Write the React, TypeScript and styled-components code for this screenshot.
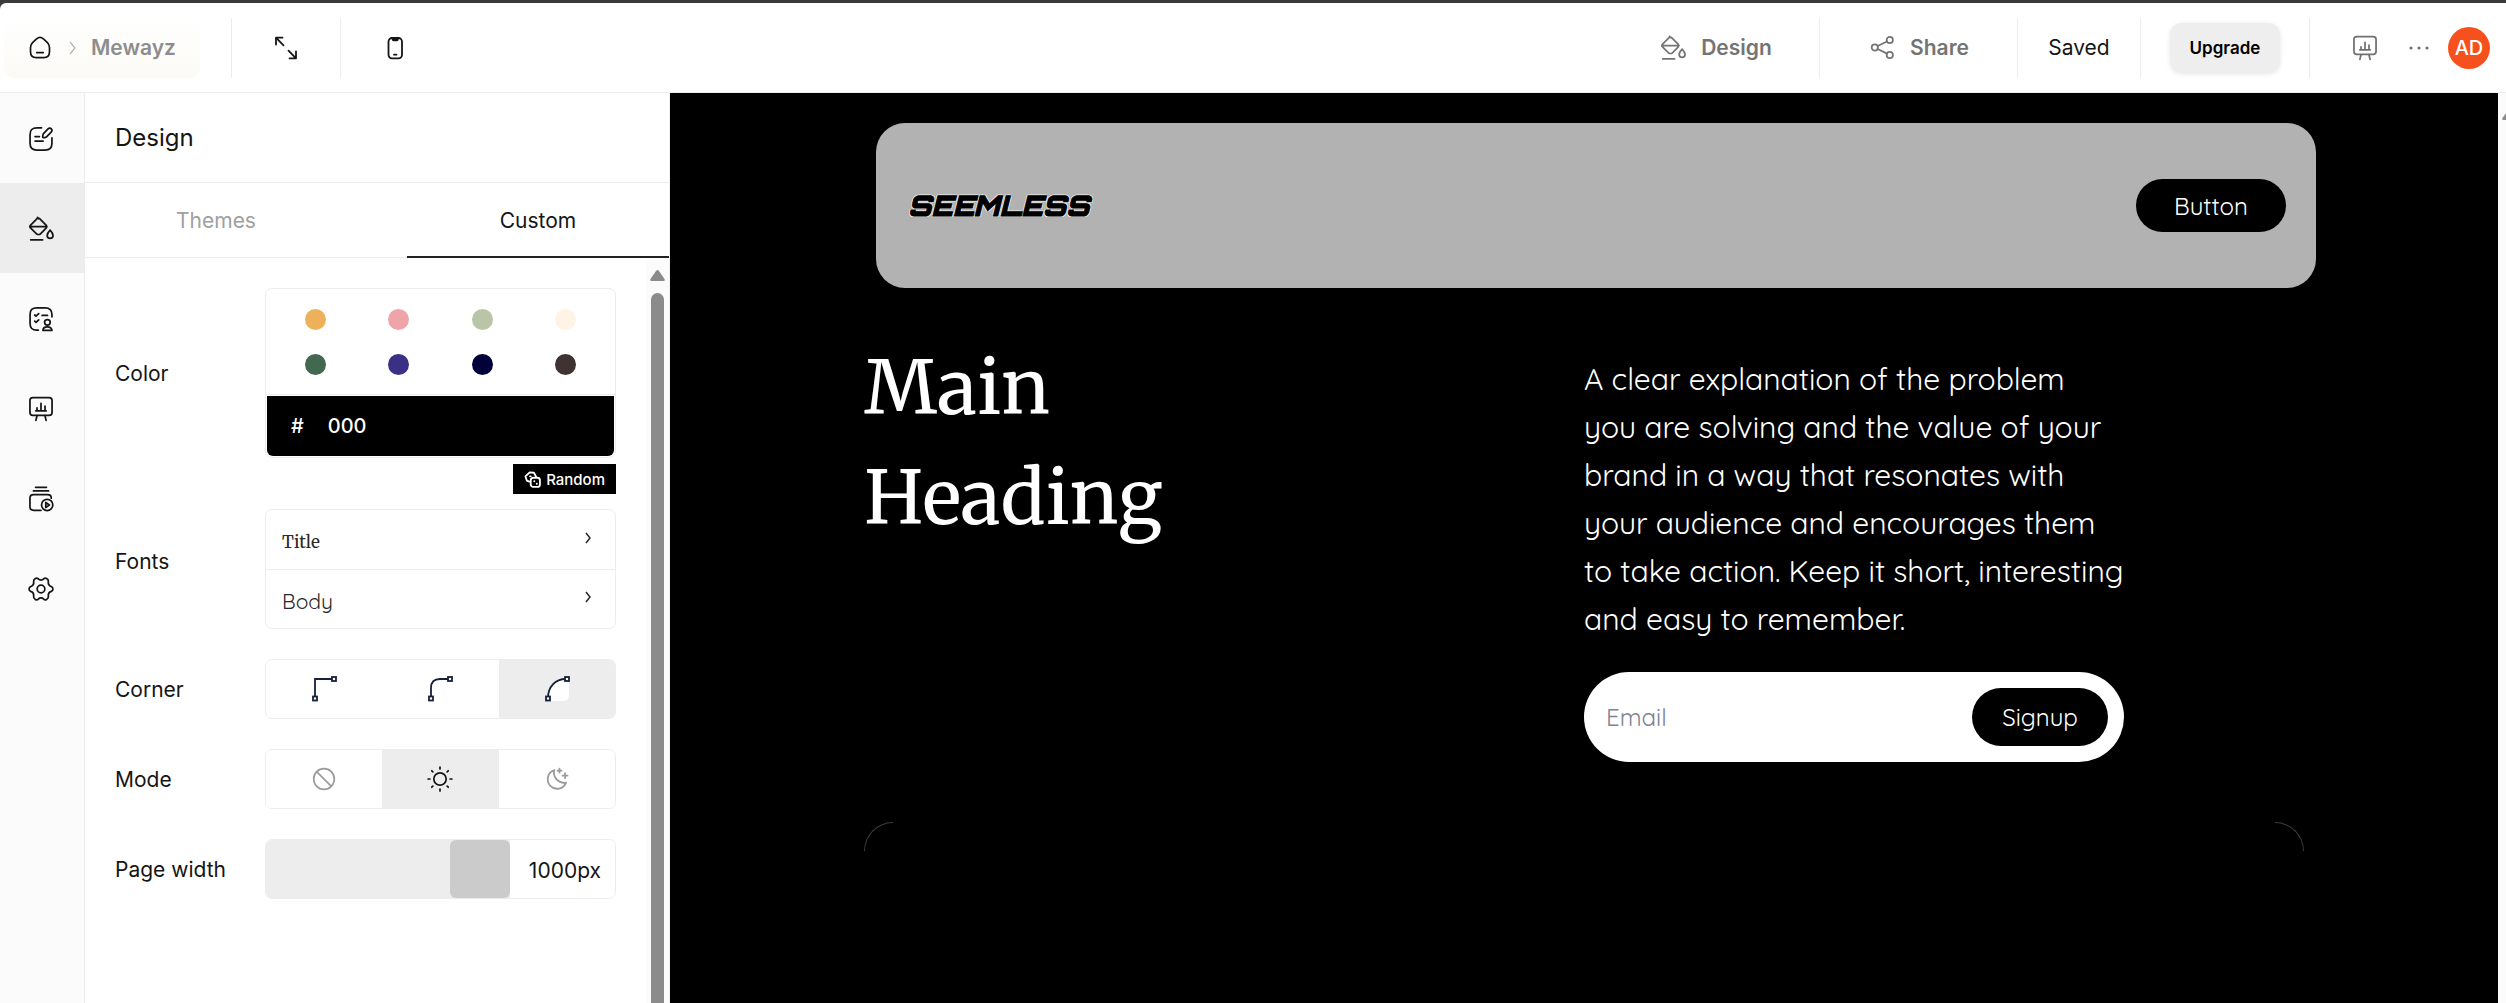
import React, { useState } from 'react';
import styled, { createGlobalStyle, css } from 'styled-components';

const Global = createGlobalStyle`
  *, *::before, *::after { box-sizing: border-box; }
  body { margin: 0; background: #3a3a3a; }
  body, button, input { font-family: Inter, "Liberation Sans", sans-serif; }
  button { border: 0; background: none; padding: 0; cursor: pointer; color: inherit; }
  a { color: inherit; text-decoration: none; }
  svg { display: block; flex: none; }
`;

const serif = 'Merriweather, "DejaVu Serif", "Liberation Serif", serif';
const rounded = 'Quicksand, Lato, "Open Sans", sans-serif';
const line = '#ededed';

/* ---------- shell ---------- */

const Page = styled.div`
  display: flex;
  flex-direction: column;
  min-height: 100vh;
  padding-top: 3px;
  color: #151515;
`;

const TopBar = styled.header`
  display: flex;
  justify-content: space-between;
  align-items: center;
  height: 90px;
  padding: 0 16px 0 4px;
  background: #fff;
  border-bottom: 1px solid ${line};
  border-top-left-radius: 6px;
`;

const BarGroup = styled.div`
  display: flex;
  align-items: center;
`;

const Breadcrumb = styled.nav`
  display: flex;
  align-items: center;
  width: 196px;
  height: 60px;
  margin-right: 31px;
  padding-left: 24px;
  border-radius: 10px;
  background: linear-gradient(#fff, #fbfaf5);
`;

const SiteName = styled.a`
  font-size: 21px;
  font-weight: 600;
  color: #8d8d8d;
`;

const Crumb = styled.span`
  display: flex;
  justify-content: center;
  width: 38px;
  margin-left: 1px;
  color: #aaa;
`;

const Cell = styled.div<{ $width: number; $rule?: boolean }>`
  display: flex;
  align-items: center;
  justify-content: center;
  width: ${(p) => p.$width}px;
  height: 60px;
  border-left: ${(p) => (p.$rule === false ? '0' : `1px solid ${line}`)};
`;

const IconButton = styled.button`
  display: grid;
  place-items: center;
  height: 44px;
`;

const BarButton = styled.button`
  display: flex;
  align-items: center;
  gap: 15px;
  padding-left: 2px;
  font-size: 21px;
  font-weight: 600;
  color: #747474;
`;

const Saved = styled.span`
  font-size: 21px;
`;

const Upgrade = styled.button`
  width: 110px;
  height: 50px;
  border-radius: 12px;
  background: #eee;
  box-shadow: 0 1px 5px rgba(0, 0, 0, 0.1);
  font-size: 17px;
  font-weight: 600;
  color: #000;
`;

const Account = styled.div`
  display: flex;
  align-items: center;
  height: 60px;
  padding-left: 42px;
  border-left: 1px solid ${line};
  color: #707070;
`;

const AccountTools = styled.div`
  display: flex;
  align-items: center;
  gap: 30px;
  margin-right: 18px;
`;

const Avatar = styled.button`
  width: 42px;
  height: 42px;
  border-radius: 50%;
  background: #f6511d;
  color: #fff;
  font-size: 20px;
  font-weight: 500;
`;

const Workspace = styled.div`
  display: flex;
  flex: 1;
`;

const Rail = styled.nav`
  flex: none;
  width: 85px;
  background: #fbfbfb;
  border-right: 1px solid ${line};
`;

const RailItem = styled.button<{ $active?: boolean }>`
  display: grid;
  place-items: center;
  width: 100%;
  height: 90px;
  padding: 2px 3px 0 0;
  background: ${(p) => (p.$active ? '#ededed' : 'transparent')};
`;

/* ---------- design panel ---------- */

const Panel = styled.aside`
  display: flex;
  flex-direction: column;
  flex: none;
  width: 585px;
  background: #fff;
  border-right: 1px solid #f0f0f0;
`;

const PanelTitle = styled.h1`
  margin: 0;
  padding: 0 30px;
  font-size: 24px;
  line-height: 89px;
  font-weight: 400;
  border-bottom: 1px solid ${line};
`;

const Tabs = styled.div`
  display: flex;
  justify-content: space-between;
  border-bottom: 1px solid ${line};
`;

const Tab = styled.button<{ $active?: boolean }>`
  width: 262px;
  height: 75px;
  margin-bottom: -1px;
  padding-top: 2px;
  border-bottom: 2px solid ${(p) => (p.$active ? '#222' : 'transparent')};
  font-size: 21px;
  color: ${(p) => (p.$active ? '#151515' : '#a0a0a0')};
`;

const PanelScroll = styled.div`
  display: flex;
  flex: 1;
`;

const Settings = styled.form`
  flex: 1;
  padding: 30px;
`;

const ScrollTrack = styled.div`
  display: flex;
  flex-direction: column;
  align-items: center;
  width: 23px;
  padding-top: 12px;
  gap: 12px;
  background: #fbfbfb;
`;

const ScrollThumb = styled.div`
  flex: 1;
  width: 13px;
  border-radius: 7px 7px 0 0;
  background: #8b8b8b;
`;

const Field = styled.div<{ $gap?: number }>`
  display: grid;
  grid-template-columns: 150px 1fr;
  align-items: center;
  margin-bottom: ${(p) => p.$gap ?? 30}px;
`;

const Label = styled.label`
  font-size: 21px;
`;

const FontsLabel = styled.span`
  padding-bottom: 15px;
  font-size: 21px;
`;

const box = css`
  border: 1px solid ${line};
  border-radius: 7px;
  overflow: hidden;
`;

const ColorBox = styled.div`
  ${box}
  padding-bottom: 1px;
`;

const Swatches = styled.div`
  display: grid;
  grid-template-columns: repeat(4, 1fr);
  justify-items: center;
  row-gap: 24px;
  padding: 20px 8px 19px;
  border-bottom: 1px solid ${line};
`;

const Swatch = styled.button<{ $color: string }>`
  width: 21px;
  height: 21px;
  border-radius: 50%;
  background: ${(p) => p.$color};
`;

const HexRow = styled.div`
  display: flex;
  align-items: center;
  gap: 24px;
  height: 60px;
  margin: 1px 1px 0;
  padding-left: 24px;
  border-radius: 0 0 6px 6px;
  background: #000;
  color: #fff;
  font-size: 20px;
  font-weight: 500;
`;

const HexInput = styled.input`
  width: 200px;
  border: 0;
  padding: 0;
  background: none;
  color: #fff;
  font-size: 20px;
  font-weight: 500;
  outline: none;
`;

const RandomRow = styled.div`
  display: flex;
  justify-content: flex-end;
  margin-bottom: 15px;
`;

const RandomButton = styled.button`
  display: flex;
  align-items: center;
  gap: 5px;
  height: 30px;
  padding: 0 11px;
  background: #000;
  color: #fff;
  font-size: 15px;
  font-weight: 500;
`;

const FontBox = styled.div`
  ${box}
`;

const FontButton = styled.button<{ $face: string; $size: number }>`
  display: flex;
  align-items: center;
  justify-content: space-between;
  width: 100%;
  height: 59px;
  padding: 4px 24px 0 16px;
  font-family: ${(p) => p.$face};
  font-size: ${(p) => p.$size}px;
  color: #2a2a2a;

  svg { margin-bottom: 8px; }

  & + & {
    border-top: 1px solid ${line};
  }
`;

const Choices = styled.div`
  ${box}
  display: grid;
  grid-template-columns: repeat(3, 1fr);
  height: 60px;
`;

const Choice = styled.label<{ $on: boolean; $dim?: boolean }>`
  display: grid;
  place-items: center;
  cursor: pointer;
  background: ${(p) => (p.$on ? '#ededed' : '#fff')};
  color: ${(p) => (p.$on || !p.$dim ? '#151515' : '#9b9b9b')};
`;

const HiddenRadio = styled.input`
  appearance: none;
  position: absolute;
  margin: 0;
  width: 1px;
  height: 1px;
  opacity: 0;
`;

const WidthBox = styled.div`
  ${box}
  display: flex;
  height: 60px;
`;

const WidthRange = styled.input`
  appearance: none;
  flex: 1;
  min-width: 0;
  height: 100%;
  margin: 0;
  background: #ededed;

  &::-webkit-slider-thumb {
    appearance: none;
    width: 60px;
    height: 58px;
    border-radius: 6px;
    background: #cbcbcb;
  }
`;

const WidthValue = styled.input`
  width: 105px;
  border: 0;
  padding: 2px 14px 0 0;
  text-align: right;
  font-size: 21px;
  color: #151515;
  outline: none;
`;

/* ---------- site preview ---------- */

const Preview = styled.main`
  flex: 1;
  min-width: 0;
  background: #000;
  color: #fff;
  font-family: ${rounded};
`;

const Canvas = styled.div`
  max-width: 1440px;
  margin: 0 auto;
  padding-top: 30px;
`;

const SiteHeader = styled.header`
  display: flex;
  align-items: center;
  justify-content: space-between;
  height: 165px;
  margin: 0 -12px 0 12px;
  padding: 0 30px;
  border-radius: 29px;
  background: #b2b2b2;
`;

const Logo = styled.a`
  padding-left: 2px;
  font-family: Orbitron, "DejaVu Sans", sans-serif;
  font-size: 28px;
  font-weight: 900;
  font-style: italic;
  color: #000;
  text-shadow: 1px 1px #f4f4f4, -1px -1px #f4f4f4, 1px -1px #f4f4f4, -1px 1px #f4f4f4;
  -webkit-text-stroke: 1px #000;
`;

const Pill = styled.button<{ $width: number; $height: number }>`
  width: ${(p) => p.$width}px;
  height: ${(p) => p.$height}px;
  border-radius: 29px;
  background: #000;
  color: #fff;
  font-family: ${rounded};
  font-size: 24px;
`;

const Hero = styled.section`
  display: grid;
  grid-template-columns: 1fr 1fr;
  padding: 45px 0 60px;
`;

const Heading = styled.h2`
  margin: 0;
  font-family: ${serif};
  font-size: 74px;
  line-height: 110px;
  font-weight: 400;
`;

const Pitch = styled.div`
  max-width: 540px;
  padding-top: 22px;
`;

const Copy = styled.p`
  margin: 0 0 29px;
  font-size: 30px;
  line-height: 48px;
`;

const Signup = styled.form`
  display: flex;
  align-items: center;
  height: 90px;
  padding: 0 16px 0 22px;
  border-radius: 45px;
  background: #fff;
`;

const Email = styled.input`
  flex: 1;
  min-width: 0;
  border: 0;
  padding: 0;
  outline: none;
  font-family: ${rounded};
  font-size: 24px;

  &::placeholder { color: #7d8491; }
`;

const NextBlock = styled.div`
  display: flex;
  justify-content: space-between;
`;

const Corner = styled.span<{ $side: 'left' | 'right' }>`
  width: 29px;
  height: 29px;
  border-top: 1px solid #3c3c3c;
  border-${(p) => p.$side}: 1px solid #3c3c3c;
  border-top-${(p) => p.$side}-radius: 29px;
`;

const PageScroll = styled.div`
  flex: none;
  width: 8px;
  padding: 16px 0 0 4px;
  overflow: hidden;
  background: #fbfbfb;
`;

/* ---------- icons ---------- */

const Svg = ({ size = 24, w = 1.5, children }: { size?: number; w?: number; children: React.ReactNode }) => (
  <svg width={size} height={size} viewBox="0 0 24 24" fill="none" stroke="currentColor" strokeWidth={w} strokeLinecap="round" strokeLinejoin="round" aria-hidden="true">
    {children}
  </svg>
);

const HomeIcon = () => (
  <Svg size={24} w={1.7}>
    <path d="M2.5 11.4c0-2.4.7-3.6 2.3-5.1l3.8-3.5c2-1.8 4.8-1.8 6.8 0l3.8 3.5c1.6 1.5 2.3 2.7 2.3 5.1v4.1c0 4.3-1.7 6.2-5.8 6.2H8.3c-4.1 0-5.8-1.9-5.8-6.2zM8.7 16.6h6.6" />
  </Svg>
);
const ExpandIcon = () => (
  <Svg size={24} w={1.8}>
    <path d="M8.5 1.7H2v6.8M2.2 1.9l7.3 7.4M14.5 14.7l7.3 7.4M15.5 22.3H22v-6.8" />
  </Svg>
);
const PhoneIcon = () => (
  <Svg size={24} w={1.8}>
    <rect x="5.500" y="2" width="13.500" height="20.300" rx="3.500" />
    <path d="M9.3 2.3c.2 1.400.8 2 1.800 2h2.300c1 0 1.600-.6 1.800-2z" fill="currentColor" />
    <path d="M11 18.700h2.500" />
  </Svg>
);
const BucketIcon = ({ size = 26 }: { size?: number }) => (
  <Svg size={size} w={1.6}>
    <path d="M8.700 1.200l1 1.200M2.200 8.700l6.200-6.200c.8-.8 1.500-.8 2.300 0L16.900 8.700c.8.8.8 1.500 0 2.300l-5.400 5.400c-.9.900-2.700.9-3.600 0L2.300 11c-.8-.8-.8-1.600-.1-2.300zM1.900 9.900h15.300M2.500 22h11" />
    <path d="M20.400 13s-2.700 2.900-2.700 4.900a2.700 2.700 0 0 0 5.400 0c0-2-2.700-4.900-2.700-4.900z" />
  </Svg>
);
const ShareIcon = () => (
  <Svg size={25} w={1.7}>
    <circle cx="4.600" cy="12" r="3" />
    <circle cx="19" cy="4.800" r="3" />
    <circle cx="19" cy="19.300" r="3" />
    <path d="M7.400 10.600l8.900-4.400M7.400 13.400l8.900 4.500" />
  </Svg>
);
const BoardIcon = ({ size = 26 }: { size?: number }) => (
  <Svg size={size} w={1.6}>
    <rect x="1.800" y="1.500" width="20.400" height="16.300" rx="2.600" />
    <path d="M7.200 13.700h9.600M8.300 13.500v-2.500M12 13.500V6.800M15.700 13.500V9.300M8.300 18.200l-1 4.300M15.700 18.200l1 4.300" />
  </Svg>
);
const NoteIcon = () => (
  <Svg size={26} w={1.6}>
    <path d="M12.500 1.700H8.200c-4.400 0-6.300 1.900-6.300 6.300v8c0 4.400 1.900 6.300 6.300 6.300h7.600c4.400 0 6.300-1.900 6.300-6.300v-5" />
    <path d="M14.300 7l4.200-4.300c1.100-1.100 2.300-.8 3 0s1 1.900-.1 3L17.100 10c-.5.500-3 1-3.400.600s.1-3 .6-3.600zM6.500 9.700h4M6.500 13.900h7.500" />
  </Svg>
);
const TasksIcon = () => (
  <Svg size={26} w={1.6}>
    <path d="M9.500 22.300H8.200c-4.400 0-6.300-1.900-6.300-6.300V8c0-4.400 1.900-6.300 6.300-6.300h7.600c4.400 0 6.300 1.900 6.300 6.300v2M6.200 8.300l1.200 1.100 2.500-2.300M6.200 14l1.200 1.100 2.500-2.300M13 8.700h5" />
    <circle cx="17.900" cy="15.100" r="2.600" />
    <path d="M13.800 22.500c0-4.200 8.300-4.200 8.300 0z" />
  </Svg>
);
const LibraryIcon = () => (
  <Svg size={26} w={1.6}>
    <path d="M7 1.200h10M5 4.500h14M12 22.400H5.200c-2.400 0-3.400-.9-3.400-3.200v-8c0-2.400 1-3.300 3.400-3.300h13c2.400 0 3.300.9 3.300 3.300" />
    <circle cx="17.700" cy="17.500" r="5.200" />
    <path d="M16.400 15.200v4.600l3.400-2.300z" />
  </Svg>
);
const GearIcon = () => (
  <Svg size={28} w={1.5}>
    <path d="M9.700 3.300c.8.900 1.400 1 2.300 1s1.500-.1 2.300-1c.8-.8 1.500-.9 2.500-.3 1.300.8 1.800 1.300 1.500 2.700-.3 2.400.6 3.600 2.600 4.200 1 .3 1.300 1 1.300 2.100s-.3 1.800-1.300 2.100c-2 .6-2.900 1.800-2.600 4.200.3 1.400-.2 1.900-1.500 2.700-1 .6-1.700.5-2.500-.3-.8-.9-1.400-1-2.300-1s-1.500.1-2.300 1c-.8.800-1.500.9-2.500.3-1.300-.8-1.800-1.300-1.500-2.700.3-2.400-.6-3.600-2.600-4.200-1-.3-1.300-1-1.300-2.100s.3-1.800 1.300-2.100c2-.6 2.900-1.800 2.600-4.200-.3-1.400.2-1.900 1.500-2.700 1-.6 1.700-.5 2.500.3z" />
    <circle cx="12" cy="12" r="3.300" />
  </Svg>
);
const Chevron = ({ size, w }: { size: number; w: number }) => (
  <svg width={size} height={size * 2} viewBox="0 0 6 12" fill="none" stroke="currentColor" strokeWidth={w} aria-hidden="true">
    <path d="M1 1l4 5-4 5" />
  </svg>
);
const DiceIcon = () => (
  <Svg size={17} w={2.6}>
    <path d="M8 2L14 2.500 17 8M8 2L2 7.500l2 6L7.500 15" />
    <rect x="9.500" y="9.500" width="13" height="13" rx="3.500" />
    <path d="M8.500 7.500h1M14.500 14.500h.1M18 18h.1" />
  </Svg>
);
const cornerPaths = {
  square: 'M5 23V4H23',
  soft: 'M5 23V13Q5 4 14 4H23',
  round: 'M5 23C5 12 12 4 23 4',
};
const CornerIcon = ({ kind }: { kind: keyof typeof cornerPaths }) => (
  <svg width="28" height="28" viewBox="0 0 28 28" fill="none" stroke="#17203a" strokeWidth="1.8" aria-hidden="true">
    {kind === 'round' && <path d="M5 25C5 12 12 4 26 4V20Q26 26 20 26H5z" fill="#fff" stroke="none" />}
    <path d={cornerPaths[kind]} />
    <rect x="3" y="21.500" width="4" height="4" fill="#fff" />
    <rect x="22" y="2" width="4" height="4" fill="#fff" />
  </svg>
);
const NoneIcon = () => (
  <Svg size={24} w={1.7}>
    <circle cx="12" cy="12" r="10.300" />
    <path d="M4.900 4.900l14.200 14.200" />
  </Svg>
);
const SunIcon = () => (
  <Svg size={26} w={1.6}>
    <circle cx="12" cy="12" r="5.700" />
    <path d="M12 1v1.700M12 21.300V23M1 12h1.700M21.300 12H23M4.400 4.400l1 1M18.600 18.600l1 1M4.400 19.600l1-1M18.600 5.400l1-1" />
  </Svg>
);
const MoonIcon = () => (
  <Svg size={24} w={1.8}>
    <path d="M9.200 3.200a9.500 9.500 0 1 0 11.900 12.400A10.300 10.300 0 0 1 9.200 3.200zM14.500 1.700v4M12.500 3.700h4M20 6.200v5M17.500 8.700h5" />
  </Svg>
);
const Dots = () => (
  <svg width="22" height="6" viewBox="0 0 22 6" fill="currentColor" aria-hidden="true">
    <circle cx="3" cy="3" r="1.600" />
    <circle cx="11" cy="3" r="1.600" />
    <circle cx="19" cy="3" r="1.600" />
  </svg>
);
const ScrollArrow = () => (
  <svg width="15" height="11" viewBox="0 0 15 11" fill="#8b8b8b" aria-hidden="true">
    <path d="M6.200.8Q7.500-.7 8.800.8l5.700 8.200q.9 2-.9 2H1.400q-1.800 0-.9-2z" />
  </svg>
);

/* ---------- data ---------- */

const swatches = ['#edb15c', '#eea4a8', '#bac4a6', '#fff3e6', '#42694f', '#3a3187', '#02023a', '#3f3232'];

const rail = [
  { name: 'Pages', icon: <NoteIcon /> },
  { name: 'Design', icon: <BucketIcon /> },
  { name: 'Audience', icon: <TasksIcon /> },
  { name: 'Analytics', icon: <BoardIcon /> },
  { name: 'Library', icon: <LibraryIcon /> },
  { name: 'Settings', icon: <GearIcon /> },
];

const corners = ['square', 'soft', 'round'] as const;

const modes = [
  { name: 'none', icon: <NoneIcon /> },
  { name: 'light', icon: <SunIcon /> },
  { name: 'dark', icon: <MoonIcon /> },
];

export default function App() {
  const [hex, setHex] = useState('000');
  const [corner, setCorner] = useState('round');
  const [mode, setMode] = useState('light');
  const [width, setWidth] = useState(1000);

  return (
    <Page>
      <Global />
      <TopBar>
        <BarGroup>
          <Breadcrumb aria-label="Breadcrumb">
            <a href="#home" aria-label="Home"><HomeIcon /></a>
            <Crumb><Chevron size={7} w={1} /></Crumb>
            <SiteName href="#site">Mewayz</SiteName>
          </Breadcrumb>
          <Cell $width={109}><IconButton aria-label="Expand"><ExpandIcon /></IconButton></Cell>
          <Cell $width={109}><IconButton aria-label="Mobile view"><PhoneIcon /></IconButton></Cell>
        </BarGroup>
        <BarGroup>
          <Cell $width={208} $rule={false}><BarButton><BucketIcon />Design</BarButton></Cell>
          <Cell $width={198}><BarButton><ShareIcon />Share</BarButton></Cell>
          <Cell $width={123}><Saved>Saved</Saved></Cell>
          <Cell $width={169}><Upgrade>Upgrade</Upgrade></Cell>
          <Account>
            <AccountTools>
              <IconButton aria-label="Presentation"><BoardIcon /></IconButton>
              <IconButton aria-label="More"><Dots /></IconButton>
            </AccountTools>
            <Avatar>AD</Avatar>
          </Account>
        </BarGroup>
      </TopBar>

      <Workspace>
        <Rail aria-label="Sections">
          {rail.map((item) => (
            <RailItem key={item.name} aria-label={item.name} $active={item.name === 'Design'}>{item.icon}</RailItem>
          ))}
        </Rail>

        <Panel>
          <PanelTitle>Design</PanelTitle>
          <Tabs role="tablist">
            <Tab role="tab" aria-selected={false}>Themes</Tab>
            <Tab role="tab" aria-selected $active>Custom</Tab>
          </Tabs>
          <PanelScroll>
            <Settings onSubmit={(e) => e.preventDefault()}>
              <Field $gap={6}>
                <Label htmlFor="hex">Color</Label>
                <ColorBox>
                  <Swatches>
                    {swatches.map((c) => (
                      <Swatch key={c} type="button" aria-label={c} $color={c} onClick={() => setHex(c.slice(1))} />
                    ))}
                  </Swatches>
                  <HexRow>
                    <span>#</span>
                    <HexInput id="hex" value={hex} onChange={(e) => setHex(e.target.value)} />
                  </HexRow>
                </ColorBox>
              </Field>
              <RandomRow>
                <RandomButton type="button"><DiceIcon />Random</RandomButton>
              </RandomRow>
              <Field>
                <FontsLabel>Fonts</FontsLabel>
                <FontBox>
                  <FontButton type="button" $face={serif} $size={17}>Title<Chevron size={6} w={1.5} /></FontButton>
                  <FontButton type="button" $face={rounded} $size={21}>Body<Chevron size={6} w={1.5} /></FontButton>
                </FontBox>
              </Field>
              <Field>
                <Label as="span">Corner</Label>
                <Choices role="radiogroup" aria-label="Corner">
                  {corners.map((c) => (
                    <Choice key={c} $on={corner === c}>
                      <HiddenRadio type="radio" name="corner" aria-label={c} checked={corner === c} onChange={() => setCorner(c)} />
                      <CornerIcon kind={c} />
                    </Choice>
                  ))}
                </Choices>
              </Field>
              <Field>
                <Label as="span">Mode</Label>
                <Choices role="radiogroup" aria-label="Mode">
                  {modes.map((m) => (
                    <Choice key={m.name} $on={mode === m.name} $dim>
                      <HiddenRadio type="radio" name="mode" aria-label={m.name} checked={mode === m.name} onChange={() => setMode(m.name)} />
                      {m.icon}
                    </Choice>
                  ))}
                </Choices>
              </Field>
              <Field>
                <Label htmlFor="width">Page width</Label>
                <WidthBox>
                  <WidthRange id="width" type="range" min={300} max={1000} value={width} onChange={(e) => setWidth(Number(e.target.value))} />
                  <WidthValue aria-label="Page width value" readOnly value={`${width}px`} />
                </WidthBox>
              </Field>
            </Settings>
            <ScrollTrack>
              <ScrollArrow />
              <ScrollThumb />
            </ScrollTrack>
          </PanelScroll>
        </Panel>

        <Preview>
          <Canvas>
            <SiteHeader>
              <Logo href="#top">SEEMLESS</Logo>
              <Pill $width={150} $height={53}>Button</Pill>
            </SiteHeader>
            <Hero>
              <Heading>Main<br />Heading</Heading>
              <Pitch>
                <Copy>
                  A clear explanation of the problem you are solving and the value of your brand in a way that
                  resonates with your audience and encourages them to take action. Keep it short, interesting and
                  easy to remember.
                </Copy>
                <Signup onSubmit={(e) => e.preventDefault()}>
                  <Email type="email" placeholder="Email" aria-label="Email" />
                  <Pill $width={136} $height={58}>Signup</Pill>
                </Signup>
              </Pitch>
            </Hero>
            <NextBlock>
              <Corner $side="left" />
              <Corner $side="right" />
            </NextBlock>
          </Canvas>
        </Preview>
        <PageScroll><ScrollArrow /></PageScroll>
      </Workspace>
    </Page>
  );
}
